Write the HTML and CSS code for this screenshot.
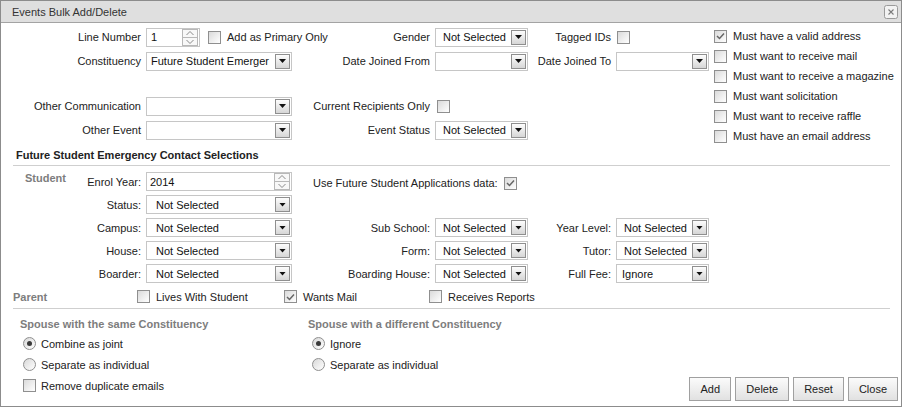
FILE: index.html
```html
<!DOCTYPE html>
<html>
<head>
<meta charset="utf-8">
<title>Events Bulk Add/Delete</title>
<link rel="stylesheet" href="styles.css">
</head>
<body>
<div class="dialog">
  <div class="titlebar">
    <span class="title">Events Bulk Add/Delete</span>
    <span class="close"><svg width="14" height="14" viewBox="0 0 14 14"><rect x="0.5" y="0.5" width="13" height="13" rx="2" fill="#f2f2f2" stroke="#9a9a9a"/><path d="M4.5 4.5 L9.5 9.5 M9.5 4.5 L4.5 9.5" stroke="#7a7a7a" stroke-width="1.1"/></svg></span>
  </div>

  <div class="top">
    <div class="grid-top">
      <div class="lbl c1">Line Number</div>
      <div class="ctl">
        <div class="spin w54"><span class="val p4">1</span><svg class="arr" width="16" height="17" viewBox="0 0 16 17"><rect x="0.5" y="0.5" width="15" height="8" fill="#f8f8f8" stroke="#b8b8b8"/><rect x="0.5" y="8.5" width="15" height="8" fill="#f8f8f8" stroke="#b8b8b8"/><polyline points="4.5,6 8,2.5 11.5,6" fill="none" stroke="#8a8a8a"/><polyline points="4.5,11 8,14.5 11.5,11" fill="none" stroke="#8a8a8a"/></svg></div>
        <span class="cb ml8"></span><span class="cbl">Add as Primary Only</span>
      </div>
      <div class="lbl">Gender</div>
      <div class="ctl"><div class="sel"><span class="val p7">Not Selected</span><span class="dd"></span></div></div>
      <div class="lbl">Tagged IDs</div>
      <div class="ctl"><span class="cb ml1"></span></div>

      <div class="lbl c1">Constituency</div>
      <div class="ctl"><div class="sel"><span class="val p4">Future Student Emerger</span><span class="dd"></span></div></div>
      <div class="lbl">Date Joined From</div>
      <div class="ctl"><div class="sel"><span class="val"></span><span class="dd"></span></div></div>
      <div class="lbl">Date Joined To</div>
      <div class="ctl"><div class="sel"><span class="val"></span><span class="dd"></span></div></div>

      <div class="blank"></div>

      <div class="lbl c1">Other Communication</div>
      <div class="ctl"><div class="sel"><span class="val"></span><span class="dd"></span></div></div>
      <div class="lbl">Current Recipients Only</div>
      <div class="ctl"><span class="cb ml2"></span></div>

      <div class="lbl c1">Other Event</div>
      <div class="ctl"><div class="sel"><span class="val"></span><span class="dd"></span></div></div>
      <div class="lbl">Event Status</div>
      <div class="ctl"><div class="sel"><span class="val p7">Not Selected</span><span class="dd"></span></div></div>
    </div>

    <div class="list">
      <div class="item"><span class="cb on"><svg width="9" height="8" viewBox="0 0 9 8"><polyline points="1,4 3.5,6.5 8,1.5" fill="none" stroke="#666" stroke-width="1.5"/></svg></span><span class="cbl">Must have a valid address</span></div>
      <div class="item"><span class="cb"></span><span class="cbl">Must want to receive mail</span></div>
      <div class="item"><span class="cb"></span><span class="cbl">Must want to receive a magazine</span></div>
      <div class="item"><span class="cb"></span><span class="cbl">Must want solicitation</span></div>
      <div class="item"><span class="cb"></span><span class="cbl">Must want to receive raffle</span></div>
      <div class="item"><span class="cb"></span><span class="cbl">Must have an email address</span></div>
    </div>
  </div>

  <div class="heading">Future Student Emergency Contact Selections</div>

  <div class="grid-stu">
    <div class="side">Student</div>

    <div class="lbl c2">Enrol Year:</div>
    <div class="ctl">
      <div class="spin wfull"><span class="val p3">2014</span><svg class="arr" width="16" height="17" viewBox="0 0 16 17"><rect x="0.5" y="0.5" width="15" height="8" fill="#f8f8f8" stroke="#b8b8b8"/><rect x="0.5" y="8.5" width="15" height="8" fill="#f8f8f8" stroke="#b8b8b8"/><polyline points="4.5,6 8,2.5 11.5,6" fill="none" stroke="#8a8a8a"/><polyline points="4.5,11 8,14.5 11.5,11" fill="none" stroke="#8a8a8a"/></svg></div>
    </div>
    <div class="ctl usefs"><span class="cbl0">Use Future Student Applications data:</span><span class="cb on ml6"><svg width="9" height="8" viewBox="0 0 9 8"><polyline points="1,4 3.5,6.5 8,1.5" fill="none" stroke="#666" stroke-width="1.5"/></svg></span></div>

    <div class="lbl c2">Status:</div>
    <div class="ctl"><div class="sel"><span class="val p9">Not Selected</span><span class="dd"></span></div></div>

    <div class="lbl c2">Campus:</div>
    <div class="ctl"><div class="sel"><span class="val p9">Not Selected</span><span class="dd"></span></div></div>
    <div class="lbl">Sub School:</div>
    <div class="ctl"><div class="sel"><span class="val p7">Not Selected</span><span class="dd"></span></div></div>
    <div class="lbl">Year Level:</div>
    <div class="ctl"><div class="sel"><span class="val p7">Not Selected</span><span class="dd"></span></div></div>

    <div class="lbl c2">House:</div>
    <div class="ctl"><div class="sel"><span class="val p9">Not Selected</span><span class="dd"></span></div></div>
    <div class="lbl">Form:</div>
    <div class="ctl"><div class="sel"><span class="val p7">Not Selected</span><span class="dd"></span></div></div>
    <div class="lbl">Tutor:</div>
    <div class="ctl"><div class="sel"><span class="val p7">Not Selected</span><span class="dd"></span></div></div>

    <div class="lbl c2">Boarder:</div>
    <div class="ctl"><div class="sel"><span class="val p9">Not Selected</span><span class="dd"></span></div></div>
    <div class="lbl">Boarding House:</div>
    <div class="ctl"><div class="sel"><span class="val p7">Not Selected</span><span class="dd"></span></div></div>
    <div class="lbl">Full Fee:</div>
    <div class="ctl"><div class="sel"><span class="val p5">Ignore</span><span class="dd"></span></div></div>
  </div>

  <div class="parent">
    <div class="side2">Parent</div>
    <div class="opt"><span class="cb"></span><span class="cbl">Lives With Student</span></div>
    <div class="opt"><span class="cb on"><svg width="9" height="8" viewBox="0 0 9 8"><polyline points="1,4 3.5,6.5 8,1.5" fill="none" stroke="#666" stroke-width="1.5"/></svg></span><span class="cbl">Wants Mail</span></div>
    <div class="opt"><span class="cb"></span><span class="cbl">Receives Reports</span></div>
  </div>

  <div class="bottom">
    <div class="grp left">
      <div class="gh">Spouse with the same Constituency</div>
      <div class="row"><span class="rb on"></span><span class="rbl">Combine as joint</span></div>
      <div class="row"><span class="rb"></span><span class="rbl">Separate as individual</span></div>
      <div class="row"><span class="cb"></span><span class="rbl">Remove duplicate emails</span></div>
    </div>
    <div class="grp right">
      <div class="gh">Spouse with a different Constituency</div>
      <div class="row"><span class="rb on"></span><span class="rbl">Ignore</span></div>
      <div class="row"><span class="rb"></span><span class="rbl">Separate as individual</span></div>
    </div>
    <div class="buttons">
      <button class="btn">Add</button>
      <button class="btn">Delete</button>
      <button class="btn">Reset</button>
      <button class="btn">Close</button>
    </div>
  </div>
</div>
</body>
</html>
```
FILE: styles.css
```css
html, body {
  margin: 0;
  padding: 0;
  background: #fff;
}
body {
  font-family: "Liberation Sans", Arial, sans-serif;
  font-size: 11px;
  color: #222;
}
.dialog {
  width: 902px;
  height: 407px;
  box-sizing: border-box;
  border: 1px solid #8c8c8c;
  background: #fff;
  display: flex;
  flex-direction: column;
  overflow: hidden;
}
.titlebar {
  height: 22px;
  flex: none;
  box-sizing: border-box;
  border-bottom: 1px solid #a3a3a3;
  background: #dfdfdf;
  display: flex;
  align-items: center;
  justify-content: space-between;
  padding: 0 3px 0 11px;
  color: #333;
}
.close { display: flex; }

/* top section */
.top {
  display: flex;
  padding-top: 2px;
  flex: none;
}
.grid-top {
  display: grid;
  grid-template-columns: 140px 146px 133px 93px 78px 93px;
  grid-template-rows: 24px 24px 21px 24px 24px;
  column-gap: 5px;
  align-items: center;
  align-content: start;
}
.blank { grid-column: 1 / -1; }
.c1 { grid-column: 1; }
.lbl {
  text-align: right;
  white-space: nowrap;
}
.ctl {
  display: flex;
  align-items: center;
  white-space: nowrap;
}
.list {
  margin-left: 5px;
  padding-top: 1px;
  display: flex;
  flex-direction: column;
}
.list .item {
  height: 20px;
  display: flex;
  align-items: center;
}

/* controls */
.sel, .spin {
  height: 19px;
  width: 100%;
  box-sizing: border-box;
  border: 1px solid #c6c6c6;
  background: #fff;
  display: flex;
  align-items: center;
}
.spin.w54 { width: 54px; flex: none; }
.val {
  flex: 1;
  white-space: nowrap;
  overflow: hidden;
  color: #111;
}
.p3 { padding-left: 3px; }
.p4 { padding-left: 4px; }
.p5 { padding-left: 5px; }
.p7 { padding-left: 7px; }
.p9 { padding-left: 9px; }
.dd {
  width: 15px;
  height: 15px;
  flex: none;
  box-sizing: border-box;
  margin-right: 1px;
  border: 1px solid #8f8f8f;
  background: linear-gradient(#fdfdfd, #d6d6d6);
  display: flex;
  align-items: center;
  justify-content: center;
}
.dd::after {
  content: "";
  width: 7px;
  height: 4px;
  background: #111;
  clip-path: polygon(0 0, 100% 0, 50% 100%);
}
.arr {
  flex: none;
  margin-right: 1px;
  display: block;
}
.cb {
  width: 13px;
  height: 13px;
  flex: none;
  box-sizing: border-box;
  border: 1px solid #8f8f8f;
  background: linear-gradient(135deg, #dadada, #ffffff);
  display: inline-flex;
  align-items: center;
  justify-content: center;
}
.cb svg { display: block; }
.ml1 { margin-left: 1px; }
.ml2 { margin-left: 2px; }
.ml6 { margin-left: 6px; }
.ml8 { margin-left: 8px; }
.cbl {
  margin-left: 6px;
  white-space: nowrap;
}
.rb {
  width: 13px;
  height: 13px;
  flex: none;
  box-sizing: border-box;
  border: 1px solid #8f8f8f;
  border-radius: 50%;
  background: linear-gradient(135deg, #d8d8d8, #ffffff);
  display: inline-flex;
  align-items: center;
  justify-content: center;
}
.rb.on::after {
  content: "";
  width: 5px;
  height: 5px;
  border-radius: 50%;
  background: #3a3a3a;
}
.rbl {
  margin-left: 5px;
  white-space: nowrap;
}

/* heading */
.heading {
  flex: none;
  height: 20px;
  box-sizing: border-box;
  line-height: 19px;
  margin: 0 11px 0 12px;
  padding-left: 3px;
  border-bottom: 1px solid #cfcfcf;
  font-weight: bold;
  color: #222;
}

/* student grid */
.grid-stu {
  flex: none;
  margin-top: 4px;
  display: grid;
  grid-template-columns: 75px 60px 146px 133px 93px 78px 93px;
  grid-auto-rows: 23px;
  column-gap: 5px;
  align-items: center;
}
.side {
  grid-column: 1;
  grid-row: 1 / span 5;
  align-self: start;
  padding-left: 24px;
  line-height: 17px;
  font-weight: bold;
  color: #7d7d7d;
}
.c2 { grid-column: 2; }
.usefs {
  grid-column: 4 / span 3;
  padding-left: 16px;
  padding-top: 3px;
}
.cbl0 { white-space: nowrap; }

/* parent row */
.parent {
  flex: none;
  height: 24px;
  box-sizing: border-box;
  margin: 0 11px 0 12px;
  border-bottom: 1px solid #cfcfcf;
  display: grid;
  grid-template-columns: 124px 147px 145px 1fr;
  align-items: center;
}
.side2 {
  font-weight: bold;
  color: #7d7d7d;
}
.opt {
  display: flex;
  align-items: center;
}

/* bottom */
.bottom {
  flex: 1;
  display: flex;
  padding-top: 6px;
}
.grp.left {
  width: 307px;
  box-sizing: border-box;
  padding-left: 19px;
}
.gh {
  line-height: 18px;
  font-weight: bold;
  color: #7d7d7d;
  white-space: nowrap;
}
.row {
  height: 21px;
  display: flex;
  align-items: center;
}
.grp.left .row { padding-left: 3px; }
.grp.right .row { padding-left: 4px; }
.buttons {
  margin-left: auto;
  align-self: flex-end;
  display: flex;
  padding: 0 3px 5px 0;
}
.btn {
  height: 24px;
  min-width: 42px;
  padding: 0 10px;
  margin-left: 4px;
  box-sizing: border-box;
  border: 1px solid #a0a0a0;
  border-radius: 0;
  background: linear-gradient(#fbfbfb, #e1e1e1);
  font-family: "Liberation Sans", Arial, sans-serif;
  font-size: 11px;
  color: #222;
}
```
